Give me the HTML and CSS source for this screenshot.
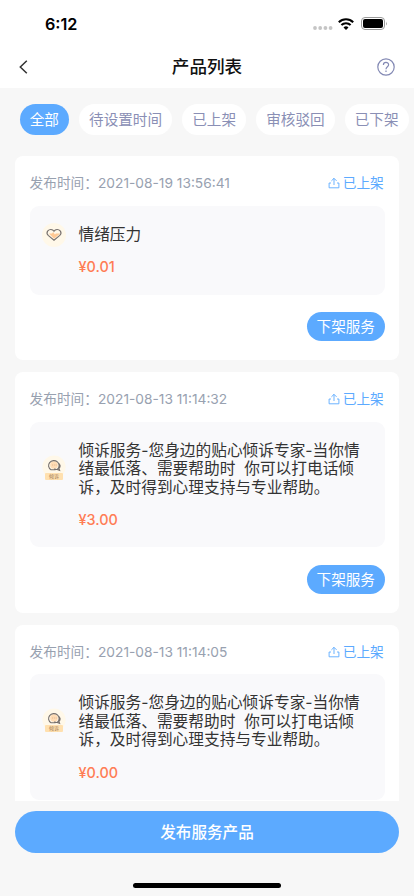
FILE: index.html
```html
<!DOCTYPE html>
<html lang="zh-CN">
<head>
<meta charset="utf-8">
<meta name="viewport" content="width=device-width, initial-scale=1">
<title>产品列表</title>
<link rel="stylesheet" href="styles.css">
</head>
<body>
<svg class="defs" width="0" height="0">
  <symbol id="upload" viewBox="0 0 12 12"><path d="M6 8V1.3M3.4 3.9 6 1.3l2.6 2.6M3 6H1.1v4.8h9.8V6H9" fill="none" stroke="currentColor" stroke-width=".9"/></symbol>
  <symbol id="heart" viewBox="0 0 24 24"><circle cx="12" cy="12" r="12" fill="#fff8e9"/><path d="M7 10.5h3l1.2-1.5 1.7 2.6 1-1.1h4.3L12 15.8Z" fill="#ffc995"/><path d="M12 8.3C10.6 6 7.4 6 5.8 7.9c-1.2 1.5-.8 3.3.4 4.5L12 17.2l5.8-4.8c1.2-1.2 1.6-3 .4-4.5C16.6 6 13.4 6 12 8.3Z" fill="none" stroke="#77706d" stroke-width="1.1"/></symbol>
  <symbol id="chat" viewBox="0 0 24 24"><circle cx="12" cy="12" r="11.6" fill="#fff8e9"/><circle cx="12" cy="10" r="3.8" fill="#ffdcb5"/><path d="M15.5 14.2A5.3 5 0 1 0 9 14.8h4.5M16 8c2.5 1 2.8 4 1 5.3l.6 2-2.4-.9c-1.1.2-2.1-.1-2.8-.8" fill="none" stroke="#77706d" stroke-width="1.1"/><path d="M10 10h.7m1.2 0h.7m1.2 0h.7" stroke="#ce9e76" stroke-width=".8"/></symbol>
</svg>
<div class="app">
  <header class="top">
    <div class="status">
      <span class="clock">6:12</span>
      <div class="signals">
        <svg width="20" height="4" viewBox="0 0 20 4" fill="#c5c5c5"><circle cx="2" cy="2" r="1.9"/><circle cx="7.2" cy="2" r="1.9"/><circle cx="12.4" cy="2" r="1.9"/><circle cx="17.6" cy="2" r="1.9"/></svg>
        <svg class="wifi" width="16" height="12" viewBox="0 0 16 12"><path d="M.8 4.2a10.4 10.4 0 0 1 14.4 0M3.4 7.1a6.6 6.6 0 0 1 9.2 0" fill="none" stroke="#000" stroke-width="2.1"/><path d="M5.5 9.4a3.7 3.7 0 0 1 5 0L8 12Z"/></svg>
        <svg class="battery" width="27" height="13" viewBox="0 0 27 13"><rect x=".5" y=".5" width="23" height="12" rx="3.5" fill="none" stroke="#999"/><rect x="2" y="2" width="20" height="9" rx="2"/><path d="M25 4.5q1.5 2 0 4Z" fill="#999"/></svg>
      </div>
    </div>
    <div class="nav">
      <svg class="back" width="9" height="14" viewBox="0 0 9 14"><path d="M7.8.7 1.3 7l6.5 6.3" fill="none" stroke="#333" stroke-width="1.5"/></svg>
      <h1>产品列表</h1>
      <svg class="help" width="18" height="18" viewBox="0 0 18 18" fill="none" stroke="#8389b4" stroke-width="1.2"><circle cx="9" cy="9" r="8.2"/><path d="M6.4 7.1c0-3.6 5.2-3.4 5.2-.3C11.6 8.8 9 8.6 9 11.2M9 12.5v1.4"/></svg>
    </div>
  </header>
  <nav class="tabs">
    <span class="tab active">全部</span><span class="tab">待设置时间</span><span class="tab">已上架</span><span class="tab">审核驳回</span><span class="tab">已下架</span>
  </nav>
  <main class="list">
    <article class="card">
      <div class="meta"><span class="label">发布时间：</span><span class="date">2021-08-19 13:56:41</span><span class="state"><svg width="12" height="12"><use href="#upload"/></svg>已上架</span></div>
      <div class="product short">
        <div class="icon"><svg width="24" height="24"><use href="#heart"/></svg></div>
        <div class="info"><p class="name">情绪压力</p><p class="price">¥0.01</p></div>
      </div>
      <button class="action">下架服务</button>
    </article>
    <article class="card">
      <div class="meta"><span class="label">发布时间：</span><span class="date">2021-08-13 11:14:32</span><span class="state"><svg width="12" height="12"><use href="#upload"/></svg>已上架</span></div>
      <div class="product tall">
        <div class="icon"><svg width="24" height="24"><use href="#chat"/></svg><span class="badge">倾诉</span></div>
        <div class="info"><p class="name">倾诉服务-您身边的贴心倾诉专家-当你情<br>绪最低落、需要帮助时&nbsp; 你可以打电话倾<br>诉，及时得到心理支持与专业帮助。</p><p class="price">¥3.00</p></div>
      </div>
      <button class="action">下架服务</button>
    </article>
    <article class="card">
      <div class="meta"><span class="label">发布时间：</span><span class="date">2021-08-13 11:14:05</span><span class="state"><svg width="12" height="12"><use href="#upload"/></svg>已上架</span></div>
      <div class="product tall">
        <div class="icon"><svg width="24" height="24"><use href="#chat"/></svg><span class="badge">倾诉</span></div>
        <div class="info"><p class="name">倾诉服务-您身边的贴心倾诉专家-当你情<br>绪最低落、需要帮助时&nbsp; 你可以打电话倾<br>诉，及时得到心理支持与专业帮助。</p><p class="price">¥0.00</p></div>
      </div>
    </article>
  </main>
  <footer class="bottom">
    <button class="publish">发布服务产品</button>
    <div class="home"></div>
  </footer>
</div>
</body>
</html>
```
FILE: styles.css
```css
* { box-sizing: border-box; }
body { margin: 0; background: #f7f7f7; font-family: Inter, "Noto Sans CJK SC", sans-serif; }
h1, p { margin: 0; }
button { border: 0; padding: 0; font-family: inherit; color: #fff; background: #5caaff; }
svg { display: block; flex: none; }
.defs { position: absolute; }
.app { width: 414px; height: 896px; display: flex; flex-direction: column; overflow: hidden; }
.top { height: 88px; flex: none; background: #fff; }
.status { height: 44px; display: flex; justify-content: space-between; padding: 0 26px 0 45px; }
.clock { font-size: 16.2px; font-weight: 600; line-height: 20px; padding-top: 14px; }
.signals { display: flex; align-items: center; padding-top: 3px; }
.signals svg:first-child { margin-top: 9px; }
.wifi { margin-left: 5px; }
.battery { margin-left: 7px; }
.nav { height: 44px; display: grid; grid-template-columns: 50px 1fr 50px; align-items: center; }
.back { margin-left: 19px; margin-top: 1px; }
h1 { padding-top: 2px; font-size: 17.6px; line-height: 26px; font-weight: 500; text-align: center; color: #111; }
.help { margin-left: 13px; margin-top: 1px; }
.tabs { flex: none; height: 68px; display: flex; gap: 9.8px; padding: 15.5px 0 0 19.5px; white-space: nowrap; }
.tab { flex: none; height: 31px; line-height: 32px; padding: 0 10.2px; border-radius: 16px; background: #fff; color: #8a8fb5; font-size: 14.6px; }
.tab.active { color: #fff; background: #5caaff; }
.list { flex: none; height: 645px; overflow: hidden; display: flex; flex-direction: column; gap: 12px; padding: 0 15px; }
.card { flex: none; background: #fff; border-radius: 8px; padding: 0 14.5px 19px; display: flex; flex-direction: column; }
.meta { height: 49.5px; padding-top: 5px; display: flex; align-items: center; color: #98a1b0; font-size: 13.7px; line-height: 20px; white-space: nowrap; }
.date { font-size: 13.75px; }
.state { margin-left: auto; margin-right: .7px; display: flex; align-items: center; gap: 2.5px; color: #5caaff; }
.product { display: flex; align-items: center; padding-left: 12.5px; border-radius: 9px; background: #f9f9fb; }
.short { height: 89px; align-items: flex-start; padding-top: 17px; }
.tall { height: 125.5px; }
.icon { width: 24px; position: relative; margin-right: 12.5px; }
.tall .icon { margin-top: -34px; }
.badge { position: absolute; left: 3px; top: 17.5px; width: 18px; height: 7px; border-radius: 1px; background: #ffe0af; color: #9b7856; font-size: 5px; line-height: 6.5px; text-align: center; }
.info { white-space: nowrap; }
.name { font-size: 15.7px; line-height: 18.5px; color: #333; }
.tall .info { padding-top: 2px; }
.short .name { line-height: 23px; }
.price { margin-top: 14px; color: #ff7d55; font-size: 14.4px; font-weight: 500; line-height: 18px; }
.short .price { margin-top: 12px; }
.action { align-self: flex-end; width: 77.5px; height: 29px; margin-top: 17.5px; padding-top: 1px; border-radius: 15px; font-size: 14.6px; line-height: 28px; }
.bottom { flex: 1; padding: 9.5px 15px 0; display: flex; flex-direction: column; align-items: center; }
.publish { width: 384px; height: 42.5px; padding-bottom: 2px; border-radius: 22px; font-size: 15.6px; font-weight: 500; }
.home { width: 148px; height: 5px; margin-top: 30px; border-radius: 3px; background: #000; }
```
